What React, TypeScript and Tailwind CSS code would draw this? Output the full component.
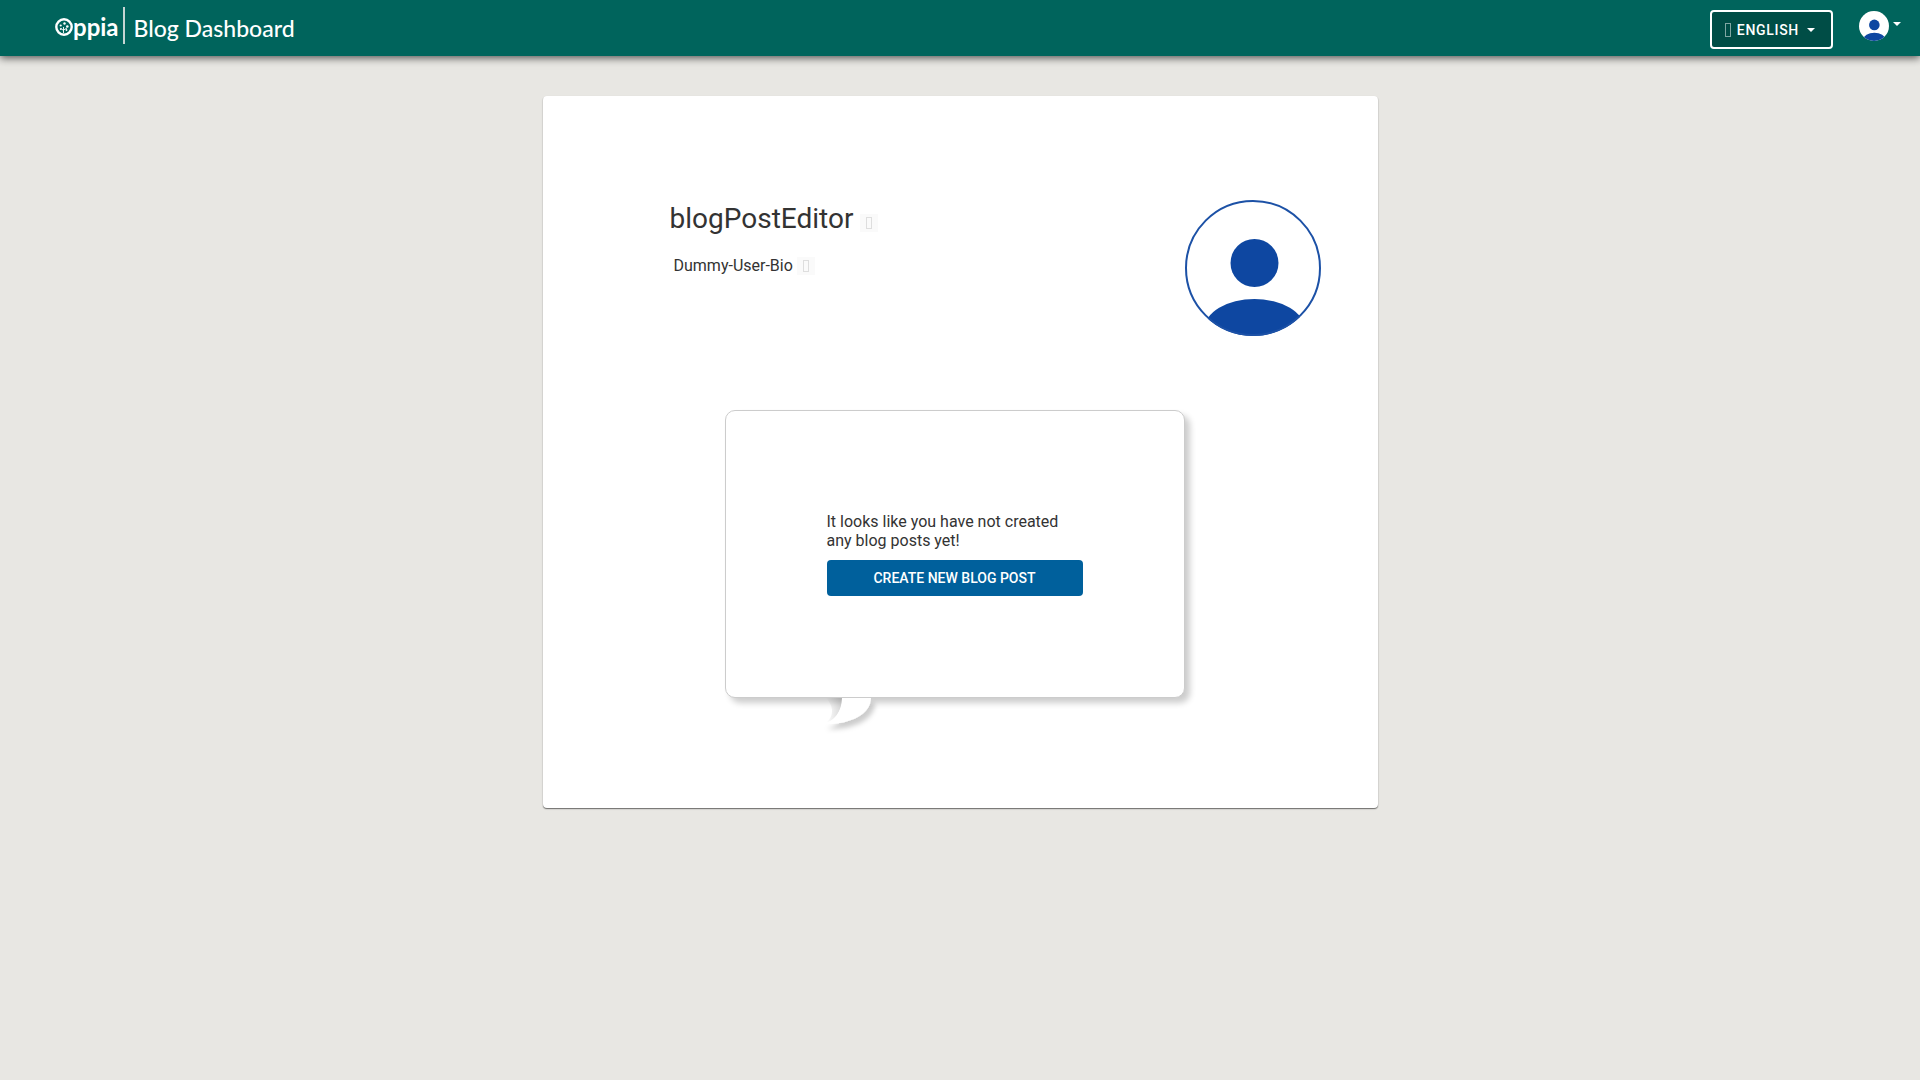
import React from 'react';

function ProfilePicture({ className, ring = false }: { className: string; ring?: boolean }) {
  return (
    <svg viewBox="0 0 136 136" className={className} role="img" aria-label="Profile picture">
      <clipPath id="disc">
        <circle cx="68" cy="68" r="68" />
      </clipPath>
      <circle cx="68" cy="68" r="68" fill="#fff" />
      <g clipPath="url(#disc)" fill="#0e47a1">
        <circle cx="69.5" cy="63" r="24" />
        <ellipse cx="69.5" cy="129" rx="50" ry="30" />
      </g>
      {ring && <circle cx="68" cy="68" r="67" fill="none" stroke="#1c51a6" strokeWidth="2" />}
    </svg>
  );
}

function Caret() {
  return (
    <svg viewBox="0 0 8 4" className="h-1 w-2" aria-hidden="true">
      <path d="M0 0h8L4 4z" fill="currentColor" />
    </svg>
  );
}

function Logo() {
  return (
    <a href="#" aria-label="Oppia" className="flex h-8 items-center font-['Lato'] text-2xl leading-6 font-bold text-white">
      <svg viewBox="0 0 18 18" className="h-[18px] w-[18px]" aria-hidden="true">
        <circle cx="9" cy="9" r="7.700" fill="none" stroke="#fff" strokeWidth="2.400" />
        <path d="M8.500 15V9M8.500 12.500L6 10.500M8.500 12l3.500-2" stroke="#fff" strokeWidth="0.900" fill="none" />
        <circle cx="9.500" cy="5.500" r="1.200" fill="#fff" />
        <circle cx="5.700" cy="7.500" r="1.100" fill="#fff" />
        <circle cx="12.300" cy="8.500" r="1.300" fill="#fff" />
        <circle cx="5.800" cy="11" r="0.900" fill="#fff" />
        <circle cx="11.500" cy="12" r="0.900" fill="#fff" />
      </svg>
      <span>ppia</span>
    </a>
  );
}

function EditButton({ label }: { label: string }) {
  return (
    <button aria-label={label} className="flex h-[18px] w-[18px] items-center justify-center bg-[#fafafa]">
      <span className="h-3 w-[6px] border border-[#dedede]" />
    </button>
  );
}

export default function App() {
  return (
    <div className="min-h-screen bg-[#e8e7e3] font-['Roboto',sans-serif] text-[#333]">
      <header className="relative flex h-14 items-start justify-between bg-[#00645c] pr-[19px] pl-[55px] text-white shadow-[0_2px_8px_rgba(0,0,0,0.65)]">
        <div className="flex pt-[7px]">
          <div className="pt-1">
            <Logo />
          </div>
          <div className="ml-1 h-[37px] w-[2px] bg-[#c5d5d3]" />
          <h1 className="ml-[9px] pt-[5px] font-['Lato'] text-[23px] leading-8 font-medium">Blog Dashboard</h1>
        </div>
        <div className="flex">
          <button className="mt-[10px] flex h-[39px] items-center rounded-[4px] border-2 border-white bg-[#004d46] pr-4 pl-[13px] text-sm font-medium tracking-wider">
            <span className="mr-[6px] h-[14px] w-[6px] border border-[#80a6a2]" />
            ENGLISH
            <span className="ml-2">
              <Caret />
            </span>
          </button>
          <button aria-label="Profile menu" className="mt-[11px] ml-[26px] flex items-start gap-1">
            <ProfilePicture className="h-[30px] w-[30px]" />
            <span className="pt-[11px]">
              <Caret />
            </span>
          </button>
        </div>
      </header>

      <main className="flex justify-center px-4 pt-10 pb-10">
        <section className="w-full max-w-[835px] rounded-[4px] bg-white pt-[104px] pb-[110px] shadow-[0_1px_1px_rgba(0,0,0,0.45),0_1px_2px_rgba(0,0,0,0.15)]">
          <div className="flex items-start justify-between pr-[57px] pl-[127px]">
            <div className="pt-[1px]">
              <div className="flex items-center gap-[7px]">
                <h2 className="text-[28px] leading-9">blogPostEditor</h2>
                <div className="pt-2">
                  <EditButton label="Edit name" />
                </div>
              </div>
              <div className="mt-[19px] flex items-center gap-1 pl-1">
                <p className="text-base leading-5">Dummy-User-Bio</p>
                <EditButton label="Edit bio" />
              </div>
            </div>
            <button aria-label="Change profile picture" className="rounded-full">
              <ProfilePicture ring className="h-[136px] w-[136px]" />
            </button>
          </div>

          <div className="relative mt-[74px] mr-auto ml-[182px] w-[460px] rounded-[10px] border border-[#ccc] bg-white p-[101px] shadow-[5px_5px_6px_rgba(0,0,0,0.2)]">
            <p className="text-base leading-[19px]">It looks like you have not created any blog posts yet!</p>
            <button className="mt-[10px] h-9 w-full rounded-[4px] bg-[#00609c] text-sm font-medium text-white">CREATE NEW BLOG POST</button>
            <svg viewBox="0 0 60 42" className="absolute top-full left-[96px] h-[42px] w-[60px]" aria-hidden="true">
              <defs>
                <filter id="tail-shadow" x="-20%" y="-20%" width="150%" height="160%">
                  <feDropShadow dx="4" dy="5" stdDeviation="2.500" floodOpacity="0.2" />
                </filter>
                <linearGradient id="inner-shade">
                  <stop offset="0" stopColor="#000" stopOpacity="0" />
                  <stop offset="1" stopColor="#000" stopOpacity="0.16" />
                </linearGradient>
              </defs>
              <path d="M4 1H20C20 14 14 23 4 26C10 21 14 12 4 1Z" fill="url(#inner-shade)" />
              <path d="M20 1H49C49 17 28 28 1 27C12 24 20 15 20 1Z" fill="#fff" filter="url(#tail-shadow)" />
              <path d="M0 0.500H60" stroke="#ccc" />
            </svg>
          </div>
        </section>
      </main>
    </div>
  );
}
